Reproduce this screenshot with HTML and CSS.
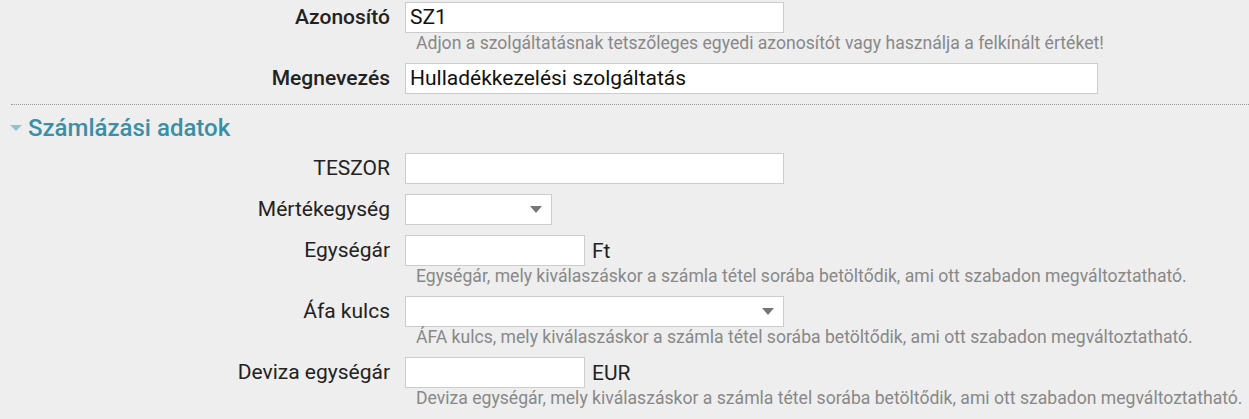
FILE: index.html
```html
<!DOCTYPE html>
<html lang="hu">
<head>
<meta charset="utf-8">
<title>Szolgáltatás</title>
<link rel="stylesheet" href="styles.css">
</head>
<body>
<div class="form">
  <div class="row">
    <label class="label strong">Azonosító</label>
    <div class="field">
      <div class="input w-md">SZ1</div>
      <div class="help">Adjon a szolgáltatásnak tetszőleges egyedi azonosítót vagy használja a felkínált értéket!</div>
    </div>
  </div>
  <div class="row">
    <label class="label strong">Megnevezés</label>
    <div class="field">
      <div class="input w-lg">Hulladékkezelési szolgáltatás</div>
    </div>
  </div>

  <div class="section">
    <div class="section-title"><span class="caret"></span>Számlázási adatok</div>
  </div>

  <div class="row">
    <label class="label">TESZOR</label>
    <div class="field">
      <div class="input w-md"></div>
    </div>
  </div>
  <div class="row">
    <label class="label">Mértékegység</label>
    <div class="field">
      <div class="input select w-xs"><span class="arrow"></span></div>
    </div>
  </div>
  <div class="row">
    <label class="label">Egységár</label>
    <div class="field">
      <div class="inline"><div class="input w-sm"></div><span class="unit">Ft</span></div>
      <div class="help">Egységár, mely kiválaszáskor a számla tétel sorába betöltődik, ami ott szabadon megváltoztatható.</div>
    </div>
  </div>
  <div class="row">
    <label class="label">Áfa kulcs</label>
    <div class="field">
      <div class="input select w-md"><span class="arrow"></span></div>
      <div class="help">ÁFA kulcs, mely kiválaszáskor a számla tétel sorába betöltődik, ami ott szabadon megváltoztatható.</div>
    </div>
  </div>
  <div class="row">
    <label class="label">Deviza egységár</label>
    <div class="field">
      <div class="inline"><div class="input w-sm"></div><span class="unit">EUR</span></div>
      <div class="help">Deviza egységár, mely kiválaszáskor a számla tétel sorába betöltődik, ami ott szabadon megváltoztatható.</div>
    </div>
  </div>
</div>
</body>
</html>
```
FILE: styles.css
```css
html, body {
  margin: 0;
  padding: 0;
  background: #eeeeee;
  font-family: Roboto, "Noto Sans", Arial, sans-serif;
  color: #222;
}
.form {
  padding-top: 2px;
}
.row {
  display: grid;
  grid-template-columns: 390px 1fr;
  column-gap: 15px;
  margin-bottom: 10px;
}
.label {
  text-align: right;
  font-size: 21px;
  line-height: 31px;
  color: #222;
}
.label.strong {
  font-weight: 500;
}
.field {
  display: flex;
  flex-direction: column;
  align-items: flex-start;
}
.input {
  box-sizing: border-box;
  height: 31px;
  border: 1px solid #cccccc;
  background: #fff;
  font-size: 21px;
  line-height: 29px;
  padding: 0 4px;
  color: #111;
}
.w-xs { width: 147px; }
.w-sm { width: 180px; }
.w-md { width: 379px; }
.w-lg { width: 693px; }
.select {
  display: flex;
  justify-content: flex-end;
  align-items: center;
  padding-right: 9px;
}
.arrow {
  width: 0;
  height: 0;
  border-left: 6.5px solid transparent;
  border-right: 6.5px solid transparent;
  border-top: 7px solid #777;
}
.inline {
  display: flex;
  align-items: center;
}
.unit {
  font-size: 21px;
  margin-left: 7px;
  color: #222;
}
.help {
  font-size: 17.6px;
  line-height: 20px;
  color: #888;
  padding-left: 11px;
}
.section {
  margin-left: 11px;
  border-top: 1px dotted #999;
  padding: 11px 0 13px;
}
.section-title {
  display: flex;
  align-items: center;
  font-size: 24px;
  font-weight: 500;
  line-height: 24px;
  color: #3a8fa6;
}
.caret {
  width: 0;
  height: 0;
  border-left: 6px solid transparent;
  border-right: 6px solid transparent;
  border-top: 6px solid #8fc3d0;
  margin: 0 6px 0 -1px;
}
```
